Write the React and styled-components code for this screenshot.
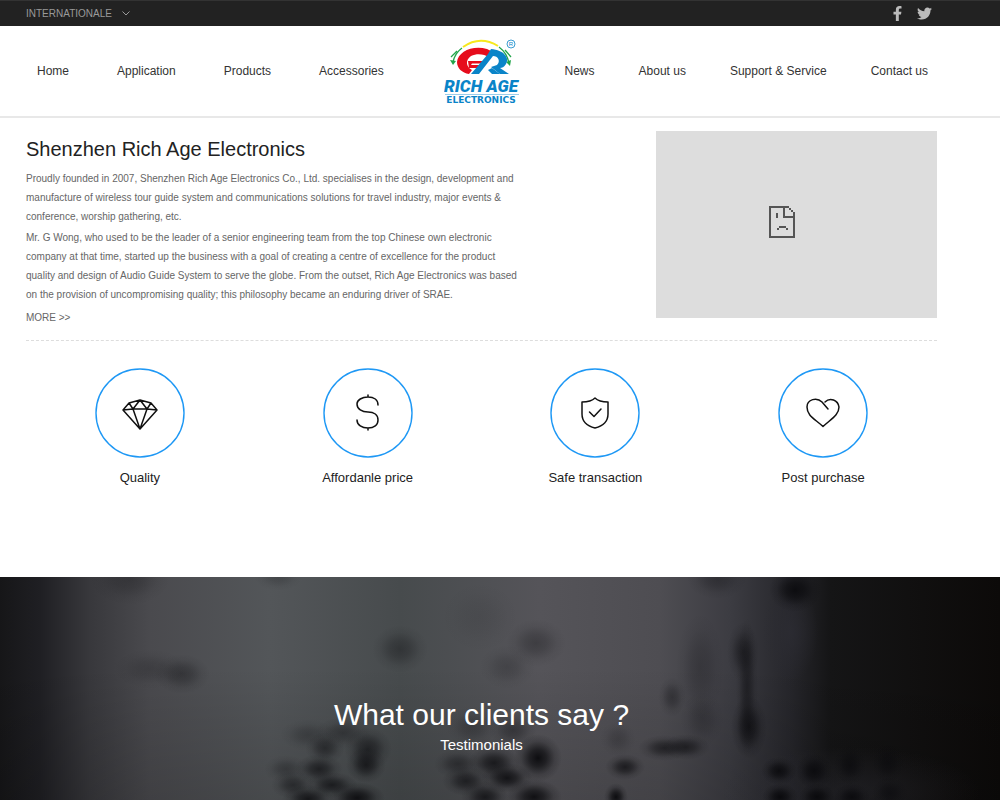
import React from 'react';
import styled, { createGlobalStyle } from 'styled-components';
import { FaFacebookF, FaTwitter } from 'react-icons/fa';

const GlobalStyle = createGlobalStyle`
  * {
    box-sizing: border-box;
  }
  body {
    margin: 0;
    background: #fff;
    color: #333;
    font-family: "Liberation Sans", Arial, sans-serif;
    font-size: 12px;
  }
  h1, h2, p, ul {
    margin: 0;
    padding: 0;
    font-weight: normal;
  }
  a {
    color: inherit;
    text-decoration: none;
  }
`;

const Page = styled.div`
  display: flex;
  flex-direction: column;
  min-height: 100vh;
`;

const TopBar = styled.div`
  display: flex;
  align-items: center;
  justify-content: space-between;
  height: 26px;
  padding: 0 68px 0 26px;
  background: #222;
  border-top: 1px solid #333;
`;

const RegionButton = styled.button`
  display: flex;
  align-items: center;
  gap: 10px;
  padding: 0;
  border: 0;
  background: none;
  color: #999;
  font-family: inherit;
  font-size: 10px;
  line-height: 16px;
`;

const Social = styled.div`
  display: flex;
  align-items: center;
  gap: 12px;
  color: #bbb;
  a {
    display: flex;
  }
`;

const Header = styled.header`
  display: grid;
  grid-template-columns: 1fr 76px 1fr;
  align-items: center;
  height: 92px;
  padding: 0 63px 0 26px;
  border-bottom: 2px solid #e8e8e8;
`;

const NavGroup = styled.nav`
  display: flex;
  justify-content: ${props => props.$end ? 'flex-end' : 'flex-start'};
  gap: ${props => props.$end ? '44px' : '48px'};
  padding: 0 9px 0 11px;
  line-height: 16px;
  color: #333;
  white-space: nowrap;
`;

const LogoLink = styled.a`
  display: block;
  svg {
    display: block;
    width: 76px;
    height: 68px;
  }
`;

const Main = styled.main`
  padding: 13px 63px 0 26px;
`;

const About = styled.section`
  display: flex;
  justify-content: space-between;
  padding-bottom: 13px;
  border-bottom: 1px dashed #ddd;
`;

const AboutText = styled.div`
  width: 520px;
  color: #666;
  font-size: 10px;
  line-height: 19px;
  h1 {
    margin: 6px 0 8px;
    color: #222;
    font-size: 20px;
    line-height: 24px;
  }
  p {
    margin-bottom: 2px;
  }
`;

const MoreLink = styled.a`
  display: inline-block;
  margin-top: 2px;
`;

const VideoBox = styled.div`
  display: flex;
  align-items: center;
  justify-content: center;
  width: 281px;
  height: 187px;
  padding-right: 29px;
  padding-bottom: 5px;
  background: #ddd;
`;

const Features = styled.ul`
  display: grid;
  grid-template-columns: repeat(4, 1fr);
  padding: 27px 0 90px;
  list-style: none;
`;

const Feature = styled.li`
  display: flex;
  flex-direction: column;
  align-items: center;
  gap: 11px;
  color: #222;
  font-size: 13px;
  line-height: 18px;
`;

const FeatureIcon = styled.svg`
  display: block;
  width: 90px;
  height: 90px;
  fill: none;
  stroke: #111;
  stroke-width: 1.5;
  stroke-linecap: round;
  stroke-linejoin: round;
  circle {
    stroke: #1e98f5;
    stroke-width: 1.4;
  }
`;

const Testimonials = styled.section`
  position: relative;
  flex: 1;
  min-height: 224px;
  padding: 118px 63px 40px 26px;
  overflow: hidden;
  background: #111;
  color: #fff;
  text-align: center;
  h2 {
    position: relative;
    font-size: 30px;
    line-height: 40px;
  }
  p {
    position: relative;
    font-size: 15px;
    line-height: 20px;
  }
`;

const Backdrop = styled.svg`
  position: absolute;
  top: 0;
  left: 0;
  width: 100%;
  height: 100%;
`;

const Logo = () => (
  <svg viewBox="0 0 76 68" role="img" aria-label="Rich Age Electronics">
    <path d="M19 10 Q36 -2 54 9" fill="none" stroke="#f7e81c" strokeWidth="2" />
    <path d="M18 11 Q11 16 9 25 M13 14 L7 20 M55 10 Q63 16 65 26 M61 13 L67 20" fill="none" stroke="#22a54a" strokeWidth="1.3" />
    <path d="M6 23 L9 28 L12 24 Z M62 25 L66 29 L67 23 Z" fill="#22a54a" />
    <path d="M43 12 C28 8 14 15 13 25 C13 31 18 36 25 37 L28 33 C22 30 21 23 27 19 C33 16 40 17 45 20 L49 15 Z" fill="#e60c1c" />
    <path d="M24 24 H41 L39 26.500 H28 L27 28 H37 L35 31 H25 Z" fill="#e60c1c" />
    <path d="M47 12 C60 13 66 21 62 27 C60 30 58 31 56 31 L65 37 H56 L47 30 L53 28 C57 24 54 19 49 19 L35 37 H27 L44 17 Z" fill="#0a84c8" />
    <path d="M48 37 L44 33 L48 31 L56 37 Z" fill="#0a84c8" />
    <circle cx="67" cy="7" r="4" fill="none" stroke="#0a84c8" strokeWidth="0.8" />
    <text x="67" y="9" textAnchor="middle" fontSize="6" fill="#0a84c8">R</text>
    <text x="37" y="55" textAnchor="middle" fontSize="17" fontFamily="Roboto, Liberation Sans, sans-serif" fontWeight="900" fontStyle="italic" fill="#0a84c8">RICH AGE</text>
    <path d="M1 57.5 H75" stroke="#7fc0e4" strokeWidth="0.8" />
    <text x="37" y="66" textAnchor="middle" fontSize="9" fontFamily="DejaVu Sans, sans-serif" fontWeight="bold" fill="#0a84c8">ELECTRONICS</text>
  </svg>
);

const SadFile = () => (
  <svg width="26" height="32" viewBox="0 0 26 32" fill="#555" aria-hidden="true">
    <path d="M0 0 H20 V2 H2 V30 H24 V12 H14 V2 H16 V10 H24 V6 H26 V32 H0 Z" />
    <path d="M20 2 H22 V4 H20 Z M22 4 H24 V6 H22 Z" />
    <path d="M7 7 H9 V12 H7 Z M10 20 H17 V22 H10 Z M8 22 H10 V24 H8 Z M17 22 H19 V24 H17 Z" />
  </svg>
);

// every drawing sits in the same 90px box as its ring
const features = [
  { label: 'Quality', path: 'M28 42 L34 35 L45 32 L56 35 L62 42 L45 61 Z M28 42 L38 41 H52 L62 42 M34 35 L38 41 L45 32 L52 41 L56 35 M38 41 L45 61 L52 41' },
  { label: 'Affordanle price', path: 'M55 37 C55 32 51 29 45 29 C39 29 34 32 34 36 C34 41 39 44 45 44 C51 44 55 47 55 52 C55 57 51 60 45 60 C39 60 34 57 34 52 M45 27 V29 M45 60 V62' },
  { label: 'Safe transaction', path: 'M45 30 C42 33 37 34 32 34 V46 C32 53 37 58 45 60 C53 58 58 53 58 46 V34 C53 34 48 33 45 30 Z M39.5 44 L44 48.500 L51 41' },
  { label: 'Post purchase', path: 'M50 41 L44 34 C39 29 29 31 29 39 C29 48 37 51 45 58.500 C53 51 61 47 61 39 C60 32 52 29 47 34' },
];

// [cx, cy, rx, ry, opacity]
const spots = [
  [182, 97, 28, 20, 0.35], [150, 92, 36, 20, 0.2], [130, 2, 40, 26, 0.25], [278, 0, 24, 14, 0.2],
  [400, 72, 28, 24, 0.35], [536, 66, 30, 24, 0.3], [507, 90, 28, 22, 0.2], [480, 40, 40, 36, 0.08],
  [717, 2, 30, 20, 0.3], [795, 13, 26, 22, 0.9],
  [743, 75, 16, 30, 0.5], [749, 150, 18, 32, 0.75], [747, 110, 11, 70, 0.5],
  [700, 90, 24, 54, 0.22], [702, 142, 22, 28, 0.22], [672, 120, 14, 20, 0.35],
  [664, 171, 26, 13, 0.6], [686, 170, 24, 13, 0.6],
  [368, 172, 24, 22, 0.6], [366, 188, 20, 18, 0.7], [343, 156, 28, 16, 0.35], [308, 158, 28, 16, 0.25],
  [325, 171, 20, 16, 0.5], [319, 192, 24, 15, 0.65], [332, 208, 26, 13, 0.7],
  [286, 192, 22, 14, 0.3], [293, 208, 22, 14, 0.5], [357, 221, 28, 16, 0.9],
  [308, 222, 26, 14, 0.8], [494, 186, 26, 17, 0.75], [538, 181, 24, 24, 0.95],
  [507, 201, 26, 15, 0.85], [466, 204, 24, 15, 0.65], [458, 187, 24, 15, 0.45],
  [485, 220, 24, 16, 0.75], [534, 220, 28, 18, 0.9], [513, 153, 24, 18, 0.35], [472, 150, 26, 20, 0.25],
  [625, 190, 20, 13, 0.7], [616, 220, 12, 14, 0.95], [618, 162, 18, 18, 0.2],
  [779, 194, 18, 14, 0.9], [814, 194, 18, 18, 0.9], [850, 188, 16, 20, 0.7], [888, 186, 16, 20, 0.6],
  [780, 220, 18, 14, 1], [817, 220, 18, 14, 1], [852, 220, 18, 14, 0.9], [890, 216, 18, 16, 0.6],
];

const App = () => (
  <Page>
    <GlobalStyle />
    <TopBar>
      <RegionButton type="button">
        INTERNATIONALE
        <svg width="8" height="5" viewBox="0 0 8 5" fill="none" stroke="#999" aria-hidden="true">
          <path d="M0.5 0.5 L4 4 L7.5 0.5" />
        </svg>
      </RegionButton>
      <Social>
        <a href="#facebook" aria-label="Facebook"><FaFacebookF size={15} /></a>
        <a href="#twitter" aria-label="Twitter"><FaTwitter size={15} /></a>
      </Social>
    </TopBar>
    <Header>
      <NavGroup>
        <a href="#home">Home</a>
        <a href="#application">Application</a>
        <a href="#products">Products</a>
        <a href="#accessories">Accessories</a>
      </NavGroup>
      <LogoLink href="#home"><Logo /></LogoLink>
      <NavGroup $end>
        <a href="#news">News</a>
        <a href="#about">About us</a>
        <a href="#support">Support &amp; Service</a>
        <a href="#contact">Contact us</a>
      </NavGroup>
    </Header>
    <Main>
      <About>
        <AboutText>
          <h1>Shenzhen Rich Age Electronics</h1>
          <p>
            Proudly founded in 2007, Shenzhen Rich Age Electronics Co., Ltd. specialises in the design, development and<br />
            manufacture of wireless tour guide system and communications solutions for travel industry, major events &amp;<br />
            conference, worship gathering, etc.
          </p>
          <p>
            Mr. G Wong, who used to be the leader of a senior engineering team from the top Chinese own electronic<br />
            company at that time, started up the business with a goal of creating a centre of excellence for the product<br />
            quality and design of Audio Guide System to serve the globe. From the outset, Rich Age Electronics was based<br />
            on the provision of uncompromising quality; this philosophy became an enduring driver of SRAE.
          </p>
          <MoreLink href="#more">MORE &gt;&gt;</MoreLink>
        </AboutText>
        <VideoBox><SadFile /></VideoBox>
      </About>
      <Features>
        {features.map(feature => (
          <Feature key={feature.label}>
            <FeatureIcon viewBox="0 0 90 90" aria-hidden="true">
              <circle cx="45" cy="45" r="44" />
              <path d={feature.path} />
            </FeatureIcon>
            {feature.label}
          </Feature>
        ))}
      </Features>
    </Main>
    <Testimonials>
      <Backdrop viewBox="0 0 1000 224" preserveAspectRatio="none" aria-hidden="true">
        <defs>
          <linearGradient id="wall">
            <stop offset="0" stopColor="#161618" />
            <stop offset="0.04" stopColor="#1f1f23" />
            <stop offset="0.09" stopColor="#38383c" />
            <stop offset="0.15" stopColor="#4a4a4e" />
            <stop offset="0.27" stopColor="#535659" />
            <stop offset="0.4" stopColor="#474b4d" />
            <stop offset="0.54" stopColor="#555459" />
            <stop offset="0.66" stopColor="#4e4d52" />
            <stop offset="0.73" stopColor="#3c3c42" />
            <stop offset="0.79" stopColor="#26262b" />
            <stop offset="0.83" stopColor="#151516" />
            <stop offset="1" stopColor="#0c0a09" />
          </linearGradient>
          <linearGradient id="shade" x2="0" y2="1">
            <stop offset="0.4" stopColor="#000" stopOpacity="0" />
            <stop offset="1" stopColor="#000" stopOpacity="0.15" />
          </linearGradient>
          <radialGradient id="spot">
            <stop offset="0" stopColor="#0a0a0d" />
            <stop offset="0.35" stopColor="#0a0a0d" stopOpacity="0.7" />
            <stop offset="0.7" stopColor="#0a0a0d" stopOpacity="0.2" />
            <stop offset="1" stopColor="#0a0a0d" stopOpacity="0" />
          </radialGradient>
          <radialGradient id="glow">
            <stop offset="0" stopColor="#2c2c33" stopOpacity="0.8" />
            <stop offset="1" stopColor="#2c2c33" stopOpacity="0" />
          </radialGradient>
        </defs>
        <rect width="1000" height="224" fill="url(#wall)" />
        <rect width="1000" height="224" fill="url(#shade)" />
        <ellipse cx="790" cy="55" rx="28" ry="50" fill="url(#glow)" />
        <ellipse cx="850" cy="215" rx="130" ry="45" fill="url(#glow)" opacity="0.6" />
        {spots.map(([cx, cy, rx, ry, opacity]) => (
          <ellipse key={`${cx}-${cy}`} cx={cx} cy={cy} rx={rx} ry={ry} opacity={opacity} fill="url(#spot)" />
        ))}
      </Backdrop>
      <h2>What our clients say ?</h2>
      <p>Testimonials</p>
    </Testimonials>
  </Page>
);

export default App;
